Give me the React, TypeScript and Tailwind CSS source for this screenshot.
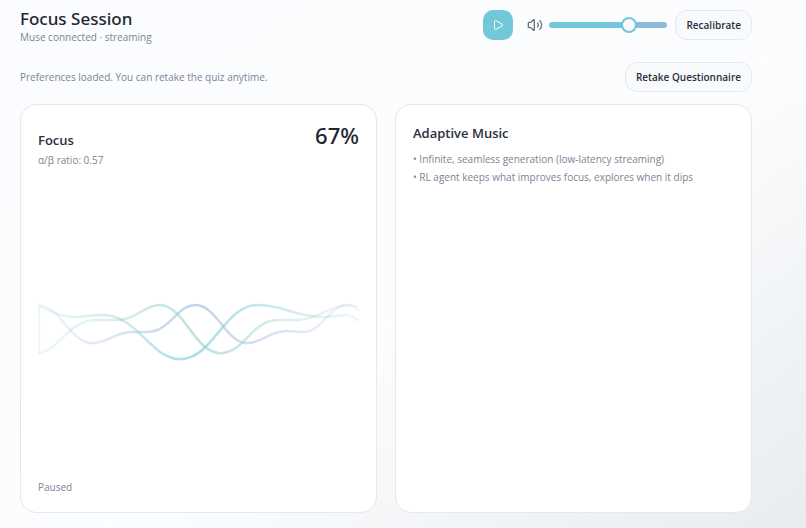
import { Play, Volume2 } from "lucide-react";
import { useState } from "react";
import type { ReactNode } from "react";

type Wave = {
  id: string;
  color: string;
  path: string;
};

const WAVES: Wave[] = [
  {
    id: "teal",
    color: "#74c7d6",
    path: "M0 6 C16 12 22 17 36 17 C48 17 52 15 64 15 C100 15 112 59 142 59 C174 59 186 5 219 5 C244 5 258 17 284 17 C294 17 298 15 306 15 C312 15 317 18 320 21",
  },
  {
    id: "indigo",
    color: "#98b7dc",
    path: "M0 5 C22 5 32 43 54 43 C70 43 76 32 94 32 C100 32 102 32 108 32 C132 32 138 5 157 5 C178 5 188 43 208 43 C224 43 230 31 248 31 C254 31 258 32 264 32 C284 32 290 5 308 5 C313 5 317 8 320 11",
  },
  {
    id: "green",
    color: "#8fd0c0",
    path: "M0 53 C22 50 30 20 58 20 C66 20 70 20 78 20 C98 20 106 5 121 5 C146 5 156 53 182 53 C206 53 212 20 240 20 C248 20 252 20 260 20 C282 18 292 5 309 5 C314 5 317 6 320 7",
  },
];

function Waveform() {
  return (
    <svg aria-hidden="true" className="w-full" fill="none" viewBox="0 0 320 64">
      <defs>
        {WAVES.map((wave) => (
          <linearGradient
            gradientUnits="userSpaceOnUse"
            id={`wave-${wave.id}`}
            key={wave.id}
            x1="0"
            x2="320"
            y1="0"
            y2="0"
          >
            <stop offset="0" stopColor={wave.color} stopOpacity="0.12" />
            <stop offset="0.5" stopColor={wave.color} stopOpacity="0.6" />
            <stop offset="1" stopColor={wave.color} stopOpacity="0.12" />
          </linearGradient>
        ))}
      </defs>
      <path d="M1 6V53" stroke="#74c7d6" strokeOpacity="0.12" strokeWidth="2" />
      {WAVES.map((wave) => (
        <path
          d={wave.path}
          key={wave.id}
          stroke={`url(#wave-${wave.id})`}
          strokeWidth="2.5"
        />
      ))}
    </svg>
  );
}

function SoftButton({ children }: { children: ReactNode }) {
  return (
    <button
      className="h-[30px] cursor-pointer rounded-xl border border-[#e5e9ef] bg-[#f8fafc] px-2.5 text-[10px] font-semibold text-[#29303a]"
      type="button"
    >
      {children}
    </button>
  );
}

function VolumeSlider() {
  const [volume, setVolume] = useState(70);

  return (
    <label className="flex items-center gap-1.5">
      <Volume2 aria-hidden="true" className="size-4 text-[#6b7280]" />
      <input
        aria-label="Volume"
        className="h-1.5 w-[118px] appearance-none rounded-full [&::-webkit-slider-thumb]:size-4 [&::-webkit-slider-thumb]:appearance-none [&::-webkit-slider-thumb]:rounded-full [&::-webkit-slider-thumb]:border-2 [&::-webkit-slider-thumb]:border-[#72c7d8] [&::-webkit-slider-thumb]:bg-[#f8fafc]"
        max={100}
        min={0}
        onChange={(event) => setVolume(Number(event.target.value))}
        style={{
          background: `linear-gradient(to right, #72c7d8 ${volume}%, #8bbcd8 ${volume}%)`,
        }}
        type="range"
        value={volume}
      />
    </label>
  );
}

export default function App() {
  return (
    <div className="flex min-h-screen flex-col bg-linear-[145deg] from-[#fafcff] via-[#fcfdfe] via-55% to-[#e8ecf0] pt-2.5 pr-[54px] pb-[15px] pl-5 font-['Open_Sans','Noto_Sans',sans-serif] text-[10px] leading-[18px] text-[#7b8494]">
      <header className="flex items-start justify-between">
        <div>
          <h1 className="font-['Noto_Sans',sans-serif] text-[17px] leading-[18px] font-medium text-[#1f2630]">
            Focus Session
          </h1>
          <p>Muse connected · streaming</p>
        </div>
        <div className="flex items-center gap-2">
          <button
            aria-label="Play"
            className="mr-1.5 flex size-[30px] cursor-pointer items-center justify-center rounded-[10px] bg-[#72c7d8] text-white"
            type="button"
          >
            <Play aria-hidden="true" className="size-3" />
          </button>
          <VolumeSlider />
          <SoftButton>Recalibrate</SoftButton>
        </div>
      </header>

      <div className="mt-4 flex items-center justify-between">
        <p>Preferences loaded. You can retake the quiz anytime.</p>
        <SoftButton>Retake Questionnaire</SoftButton>
      </div>

      <main className="mt-3 grid flex-1 grid-cols-2 gap-[18px]">
        <section className="flex flex-col rounded-2xl border border-[#e5e9ed] bg-white px-[17px] py-4">
          <div className="flex items-end justify-between">
            <h2 className="text-[13px] font-semibold text-[#29303a]">Focus</h2>
            <p className="font-['Noto_Sans',sans-serif] text-[22px] leading-7 font-medium text-[#1f2630]">
              67%
            </p>
          </div>
          <p className="mt-0.5">α/β ratio: 0.57</p>
          <div className="flex flex-1 items-center pt-[18px]">
            <Waveform />
          </div>
          <p>Paused</p>
        </section>

        <section className="rounded-2xl border border-[#e5e9ed] bg-white px-[17px] py-[19px]">
          <h2 className="text-[13px] font-semibold text-[#29303a]">Adaptive Music</h2>
          <ul className="mt-2">
            <li>• Infinite, seamless generation (low-latency streaming)</li>
            <li>• RL agent keeps what improves focus, explores when it dips</li>
          </ul>
        </section>
      </main>
    </div>
  );
}
